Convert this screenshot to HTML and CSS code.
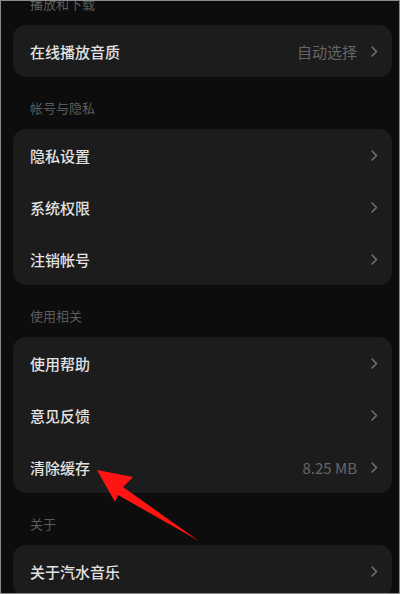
FILE: index.html
```html
<!DOCTYPE html>
<html lang="zh-CN">
<head>
  <meta charset="UTF-8">
  <title>设置</title>
  <link rel="stylesheet" href="styles.css">
</head>
<body>

<div class="frame">
  <div class="settings">

    <div class="section-title">播放和下载</div>
    <div class="card">
      <div class="row">
        <span class="label">在线播放音质</span>
        <span class="value">自动选择</span>
        <svg class="chevron" viewBox="0 0 7 11"><polyline points="1,1 5.5,5.5 1,10"/></svg>
      </div>
    </div>

    <div class="section-title">帐号与隐私</div>
    <div class="card">
      <div class="row">
        <span class="label">隐私设置</span>
        <svg class="chevron" viewBox="0 0 7 11"><polyline points="1,1 5.5,5.5 1,10"/></svg>
      </div>
      <div class="row">
        <span class="label">系统权限</span>
        <svg class="chevron" viewBox="0 0 7 11"><polyline points="1,1 5.5,5.5 1,10"/></svg>
      </div>
      <div class="row">
        <span class="label">注销帐号</span>
        <svg class="chevron" viewBox="0 0 7 11"><polyline points="1,1 5.5,5.5 1,10"/></svg>
      </div>
    </div>

    <div class="section-title">使用相关</div>
    <div class="card">
      <div class="row">
        <span class="label">使用帮助</span>
        <svg class="chevron" viewBox="0 0 7 11"><polyline points="1,1 5.5,5.5 1,10"/></svg>
      </div>
      <div class="row">
        <span class="label">意见反馈</span>
        <svg class="chevron" viewBox="0 0 7 11"><polyline points="1,1 5.5,5.5 1,10"/></svg>
      </div>
      <div class="row">
        <span class="label">清除缓存</span>
        <span class="value">8.25 MB</span>
        <svg class="chevron" viewBox="0 0 7 11"><polyline points="1,1 5.5,5.5 1,10"/></svg>
      </div>
    </div>

    <div class="section-title">关于</div>
    <div class="card">
      <div class="row">
        <span class="label">关于汽水音乐</span>
        <svg class="chevron" viewBox="0 0 7 11"><polyline points="1,1 5.5,5.5 1,10"/></svg>
      </div>
    </div>

  </div>

  <!-- annotation arrow pointing at 清除缓存 -->
  <svg class="arrow" viewBox="0 0 400 594">
    <polygon points="97,470 133,477 123,487 199,541 118,495 115,502"/>
  </svg>
</div>

</body>
</html>
```

FILE: styles.css
```css
html, body {
  margin: 0;
  padding: 0;
  background: #0d0d0d;
}

body {
  font-family: "Noto Sans CJK SC", "Noto Sans", sans-serif;
}

.frame {
  position: relative;
  width: 400px;
  height: 594px;
  box-sizing: border-box;
  border: 1px solid #8a8a8a;
  background: #0d0d0d;
  overflow: hidden;
}

.settings {
  margin: -28px 7px 0 12px;
}

.section-title {
  padding: 23px 0 13px 17px;
  font-size: 13px;
  line-height: 16px;
  color: #5c5c5c;
}

.card {
  background: #1c1c1c;
  border-radius: 13px;
}

.row {
  display: flex;
  align-items: center;
  height: 52px;
  padding: 0 14px 0 17px;
}

.label {
  flex: 1;
  font-size: 15px;
  font-weight: 500;
  color: #e2e2e2;
}

.value {
  font-size: 15px;
  color: #666;
  margin-right: 14px;
}

.chevron {
  width: 7px;
  height: 11px;
  fill: none;
  stroke: #707070;
  stroke-width: 1.6;
  stroke-linecap: round;
  stroke-linejoin: round;
}

.arrow {
  position: absolute;
  left: -1px;
  top: -1px;
  width: 400px;
  height: 594px;
  pointer-events: none;
}

.arrow polygon {
  fill: #ff1414;
}
```
